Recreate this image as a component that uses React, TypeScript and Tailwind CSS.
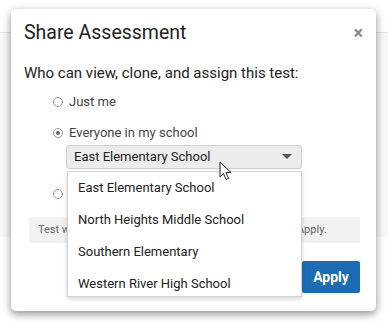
const schools = [
  "East Elementary School",
  "North Heights Middle School",
  "Southern Elementary",
  "Western River High School",
];

function Radio({ checked }: { checked?: boolean }) {
  return (
    <span className="flex h-[10px] w-[10px] items-center justify-center rounded-full border border-[#9a9a9a] bg-white">
      {checked && <span className="h-[4px] w-[4px] rounded-full bg-[#666]" />}
    </span>
  );
}

function Cursor() {
  return (
    <svg width="16" height="22" viewBox="0 0 16 22" className="absolute left-[219px] top-[161px]">
      <path
        d="M1 1 L1 16 L4.5 12.5 L7 18.5 L9.5 17.5 L7 11.5 L12 11.5 Z"
        fill="#fff"
        stroke="#222"
        strokeWidth="1"
        strokeLinejoin="round"
      />
    </svg>
  );
}

export default function App() {
  return (
    <div className="relative h-[322px] w-[388px] overflow-hidden bg-white font-['Roboto',sans-serif] text-[#333]">
      {/* page behind the modal */}
      <div className="h-[33px] border-b border-[#e6e6e6] bg-white" />
      <div className="h-[204px] bg-[#f8f8f8]" />

      {/* modal */}
      <div className="absolute left-[11px] top-[9px] flex h-[302px] w-[365px] flex-col rounded-[5px] bg-white px-[13px] shadow-[0_3px_8px_rgba(0,0,0,0.45)]">
        <div className="flex items-center justify-between pt-[12px]">
          <h2 className="text-[19.5px] leading-[24px] text-[#222]">Share Assessment</h2>
          <span className="text-[18px] font-bold leading-none text-[#8a8a8a]">×</span>
        </div>

        <p className="mt-[18px] text-[15px] leading-[20px] text-[#222]">
          Who can view, clone, and assign this test:
        </p>

        <div className="mt-[8px] flex flex-col pl-[29px] text-[13px] text-[#444]">
          <label className="flex h-[22px] items-center gap-[6px]">
            <Radio />
            <span>Just me</span>
          </label>
          <label className="mt-[9px] flex h-[22px] items-center gap-[6px]">
            <Radio checked />
            <span>Everyone in my school</span>
          </label>
          <div className="ml-[13px] mt-[1px] flex h-[24px] w-[236px] items-center justify-between rounded-[3px] border border-[#cfcfcf] bg-[#ececec] pl-[7px] pr-[9px] text-[#222]">
            <span>East Elementary School</span>
            <svg width="10" height="6" viewBox="0 0 10 6">
              <path d="M0 0 L10 0 L5 5 Z" fill="#555" />
            </svg>
          </div>
          <label className="mt-[14px] flex h-[22px] items-center gap-[6px]">
            <Radio />
            <span>Everyone in my district</span>
          </label>
        </div>

        <div className="ml-[5px] mr-[3px] mt-[12px] flex h-[26px] items-center overflow-hidden whitespace-nowrap bg-[#f1f1f1] px-[9px] text-[11px] text-[#666]">
          Test will be shared with everybody when you click on Apply.
        </div>

        <div className="mt-[18px] flex justify-end gap-[8px] pr-[3px]">
          <button className="h-[32px] px-[14px] text-[14px] font-bold text-[#1a6fb5]">Cancel</button>
          <button className="h-[32px] w-[58px] rounded-[2px] bg-[#1b6cb3] text-[14px] font-bold text-white">
            Apply
          </button>
        </div>
      </div>

      {/* open select list */}
      <ul className="absolute left-[67px] top-[171px] h-[126px] w-[235px] overflow-hidden border border-[#d4d4d4] bg-white text-[13px] text-[#222] shadow-[0_2px_4px_rgba(0,0,0,0.18)]">
        {schools.map((s) => (
          <li key={s} className="flex h-[32px] items-center pl-[10px]">
            {s}
          </li>
        ))}
      </ul>

      <Cursor />
    </div>
  );
}
